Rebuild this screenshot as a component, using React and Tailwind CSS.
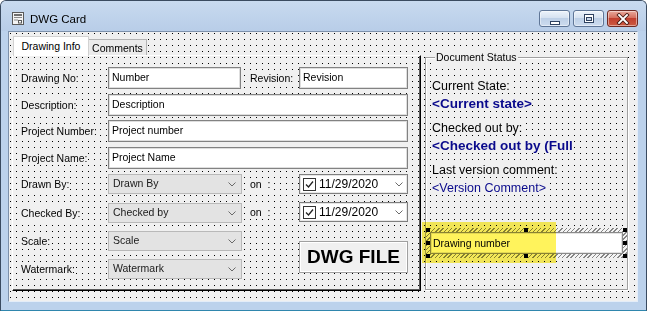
import React from 'react'

const TitleIcon = () => (
    <svg width="12" height="13" viewBox="0 0 12 13">
        <rect x="0.5" y="0.5" width="11" height="12" fill="#f4f4f4" stroke="#5a5a5a" />
        <rect x="2" y="2" width="8" height="2" fill="#6f6f6f" />
        <rect x="2" y="5" width="8" height="1" fill="#8a8a8a" />
        <rect x="2" y="7.5" width="4" height="1" fill="#8a8a8a" />
        <rect x="6.5" y="8.5" width="3" height="2.5" fill="#fff" stroke="#5a5a5a" />
    </svg>
)

const CaptionButton = ({ children, red }) => (
    <div
        className={`w-[31px] h-[17px] rounded-[3px] border flex items-center justify-center shadow-[inset_0_0_0_1px_rgba(255,255,255,0.45)] ${
            red
                ? 'border-[#6e2a24] bg-[linear-gradient(#e9a99c,#d6705f_45%,#c23f2e_50%,#cc5a42)]'
                : 'border-[#5f7697] bg-[linear-gradient(#edf3fb,#d6e2f1_45%,#bed0e7_50%,#cddcef)]'
        }`}
    >
        {children}
    </div>
)

const TitleBar = () => (
    <div className="flex h-[30px] items-start bg-[linear-gradient(#c8daef,#b8cde8)]">
        <div className="ml-[11px] mt-[11px]">
            <TitleIcon />
        </div>
        <div className="ml-[6px] mt-[11px] text-[11.5px] leading-[14px]">DWG Card</div>
        <div className="ml-auto mr-[8px] mt-[9px] flex gap-[3px]">
            <CaptionButton>
                <svg width="12" height="12" viewBox="0 0 12 12">
                    <rect x="1.5" y="8.5" width="9" height="3" fill="#fff" stroke="#2f4260" />
                </svg>
            </CaptionButton>
            <CaptionButton>
                <svg width="12" height="11" viewBox="0 0 12 11">
                    <rect x="1.5" y="1.5" width="9" height="8" fill="#fff" stroke="#2f4260" />
                    <rect x="3.5" y="4.5" width="5" height="3" fill="#c9d7ea" stroke="#2f4260" />
                </svg>
            </CaptionButton>
            <CaptionButton red>
                <svg width="14" height="12" viewBox="0 0 14 12">
                    <path d="M3 2 L11 10 M11 2 L3 10" stroke="#4b1d16" strokeWidth="3.6" strokeLinecap="square" />
                    <path d="M3 2 L11 10 M11 2 L3 10" stroke="#fff" strokeWidth="1.8" strokeLinecap="square" />
                </svg>
            </CaptionButton>
        </div>
    </div>
)

// static text: opaque background only behind the glyphs, like the designer paints it
const Label = ({ children, className = '' }) => (
    <div className={`flex-none flex items-center text-[10.5px] leading-[13px] ${className}`}>
        <span className="bg-[#f0f0f0] whitespace-pre">{children}</span>
    </div>
)

const TextBox = ({ children, className = '' }) => (
    <div className={`h-[22px] flex items-center bg-white border border-[#828282] shadow-[inset_0_0_0_1px_#dedede] pl-[3px] text-[10.5px] ${className}`}>
        {children}
    </div>
)

const Chevron = () => (
    <svg width="8" height="5" viewBox="0 0 8 5">
        <path d="M0.5 0.5 L4 4 L7.5 0.5" fill="none" stroke="#6a6a6a" strokeWidth="1" />
    </svg>
)

const Combo = ({ children }) => (
    <div className="h-[20px] w-[134px] flex items-center bg-[#e3e3e3] border border-[#b9b9b9] pl-[4px] pr-[5px] text-[10.5px] text-[#1a1a1a]">
        <span>{children}</span>
        <span className="ml-auto flex">
            <Chevron />
        </span>
    </div>
)

const DatePicker = () => (
    <div className="h-[20px] w-[109px] flex items-center bg-white border border-[#7f7f7f] shadow-[inset_0_0_0_1px_#e6e6e6] pl-[3px] pr-[4px]">
        <svg width="13" height="13" viewBox="0 0 13 13">
            <rect x="0.5" y="0.5" width="12" height="12" fill="#fff" stroke="#333" />
            <path d="M3 6.5 L5.5 9 L10 3.5" fill="none" stroke="#222" strokeWidth="1.3" />
        </svg>
        <span className="ml-[3px] text-[12px] leading-[14px]">11/29/2020</span>
        <span className="ml-auto flex">
            <Chevron />
        </span>
    </div>
)

const ComboRow = ({ label, value, className = '' }) => (
    <div className={`flex items-center h-[20px] ${className}`}>
        <Label className="w-[87px]">{label}</Label>
        <Combo>{value}</Combo>
    </div>
)

const DateRow = ({ className = '' }) => (
    <div className={`flex items-center h-[20px] ${className}`}>
        <Label className="w-[49px]">on  :</Label>
        <DatePicker />
    </div>
)

const TabControl = () => (
    <div className="ml-[3px] mt-[4px] w-[409px] flex flex-col flex-none">
        <div className="flex h-[19px] items-end pl-[1px]">
            <div className="relative z-10 -mb-[1px] h-[20px] w-[76px] bg-white border border-b-0 border-[#d2d2d2] flex items-center justify-center text-[10.5px] leading-[13px]">
                Drawing Info
            </div>
            <div className="h-[16px] w-[58px] bg-[#ebebeb] border border-l-0 border-b-0 border-[#b3b3b3] flex items-center justify-center pt-[2px] text-[10.5px] leading-[13px]">
                Comments
            </div>
        </div>
        <div className="h-[236px] flex flex-col border border-t-white border-l-white border-r-black border-b-black shadow-[inset_-1px_-1px_0_#5a5a5a] pl-[8px] pt-[11px]">
            <div className="flex items-center h-[22px]">
                <Label className="w-[87px]">Drawing No:</Label>
                <TextBox className="w-[133px]">Number</TextBox>
                <Label className="ml-[9px] w-[49px]">Revision:</Label>
                <TextBox className="w-[109px]">Revision</TextBox>
            </div>
            <div className="flex items-center h-[22px] mt-[5px]">
                <Label className="w-[87px]">Description:</Label>
                <TextBox className="w-[300px]">Description</TextBox>
            </div>
            <div className="flex items-center h-[22px] mt-[4px]">
                <Label className="w-[87px]">Project Number:</Label>
                <TextBox className="w-[300px]">Project number</TextBox>
            </div>
            <div className="flex items-center h-[22px] mt-[5px]">
                <Label className="w-[87px]">Project Name:</Label>
                <TextBox className="w-[300px]">Project Name</TextBox>
            </div>
            <div className="flex mt-[5px]">
                <div className="flex flex-col">
                    <ComboRow label="Drawn By:" value="Drawn By" />
                    <ComboRow label="Checked By:" value="Checked by" className="mt-[9px]" />
                    <ComboRow label="Scale:" value="Scale" className="mt-[8px]" />
                    <ComboRow label="Watermark:" value="Watermark" className="mt-[8px]" />
                </div>
                <div className="flex flex-col ml-[8px]">
                    <DateRow />
                    <DateRow className="mt-[8px]" />
                    <div className="ml-[49px] mt-[19px] w-[109px] h-[32px] flex items-center justify-center bg-[#f0f0f0] border border-[#a0a0a0] shadow-[inset_0_0_0_1px_#fff] text-[19px] leading-[22px] font-bold">
                        DWG FILE
                    </div>
                </div>
            </div>
        </div>
    </div>
)

const Handle = ({ className }) => <div className={`absolute w-[4px] h-[4px] bg-black ${className}`} />

const GroupBox = () => (
    <div className="relative ml-[4px] mt-[25px] w-[203px] h-[233px] flex-none flex flex-col border border-[#a0a0a0] shadow-[1px_1px_0_#fff,inset_1px_1px_0_#fff] pl-[6px] text-[12.5px] leading-[18px]">
        <span className="absolute left-[9px] -top-[7px] bg-[#f0f0f0] px-[1px] text-[10.5px] leading-[13px]">Document Status</span>
        <div className="mt-[19px]">
            <span className="bg-[#f0f0f0]">Current State:</span>
        </div>
        <div>
            <span className="bg-[#f0f0f0] font-bold text-[13.5px] text-[#0a0a8c]">&lt;Current state&gt;</span>
        </div>
        <div className="mt-[6px]">
            <span className="bg-[#f0f0f0]">Checked out by:</span>
        </div>
        <div className="whitespace-nowrap overflow-hidden">
            <span className="bg-[#f0f0f0] font-bold text-[13.5px] text-[#0a0a8c]">&lt;Checked out by (Full</span>
        </div>
        <div className="mt-[6px]">
            <span className="bg-[#f0f0f0]">Last version comment:</span>
        </div>
        <div>
            <span className="bg-[#f0f0f0] text-[#0a0a8c]">&lt;Version Comment&gt;</span>
        </div>
        <div className="relative -ml-[6px] mt-[31px] w-[201px] h-[30px] p-[4px] bg-[repeating-linear-gradient(135deg,#858585_0_1px,#f4f4f4_1px_3px)]">
            <div className="h-full bg-white border border-[#8a8a8a] shadow-[inset_0_0_0_1px_#e3e3e3] flex items-center pl-[2px] text-[10.5px] leading-none">
                Drawing number
            </div>
            <Handle className="left-0 top-0" />
            <Handle className="left-[98px] top-0" />
            <Handle className="right-0 top-0" />
            <Handle className="left-0 top-[13px]" />
            <Handle className="right-0 top-[13px]" />
            <Handle className="left-0 bottom-0" />
            <Handle className="left-[98px] bottom-0" />
            <Handle className="right-0 bottom-0" />
            <div className="absolute -left-[4px] -top-[6px] w-[134px] h-[41px] bg-[#fff35c] mix-blend-multiply" />
        </div>
    </div>
)

export default function App() {
    return (
        <div className="w-[647px] h-[311px] flex flex-col overflow-hidden border border-[#3a4b60] border-b-[#2f86ad] rounded-t-[6px] bg-[#bcd2ec] font-['Liberation_Sans',Arial,sans-serif] text-black">
            <TitleBar />
            <div className="ml-[7px] w-[630px] h-[271px] flex-none flex items-start border border-t-[#7d91ab] border-l-[#7d91ab] border-r-[#e4edf8] border-b-[#e4edf8] bg-[#f0f0f0] bg-[image:conic-gradient(at_1px_1px,transparent_75%,#000_0)] bg-[length:6px_6px] bg-[position:1px_1px]">
                <TabControl />
                <GroupBox />
            </div>
        </div>
    )
}
